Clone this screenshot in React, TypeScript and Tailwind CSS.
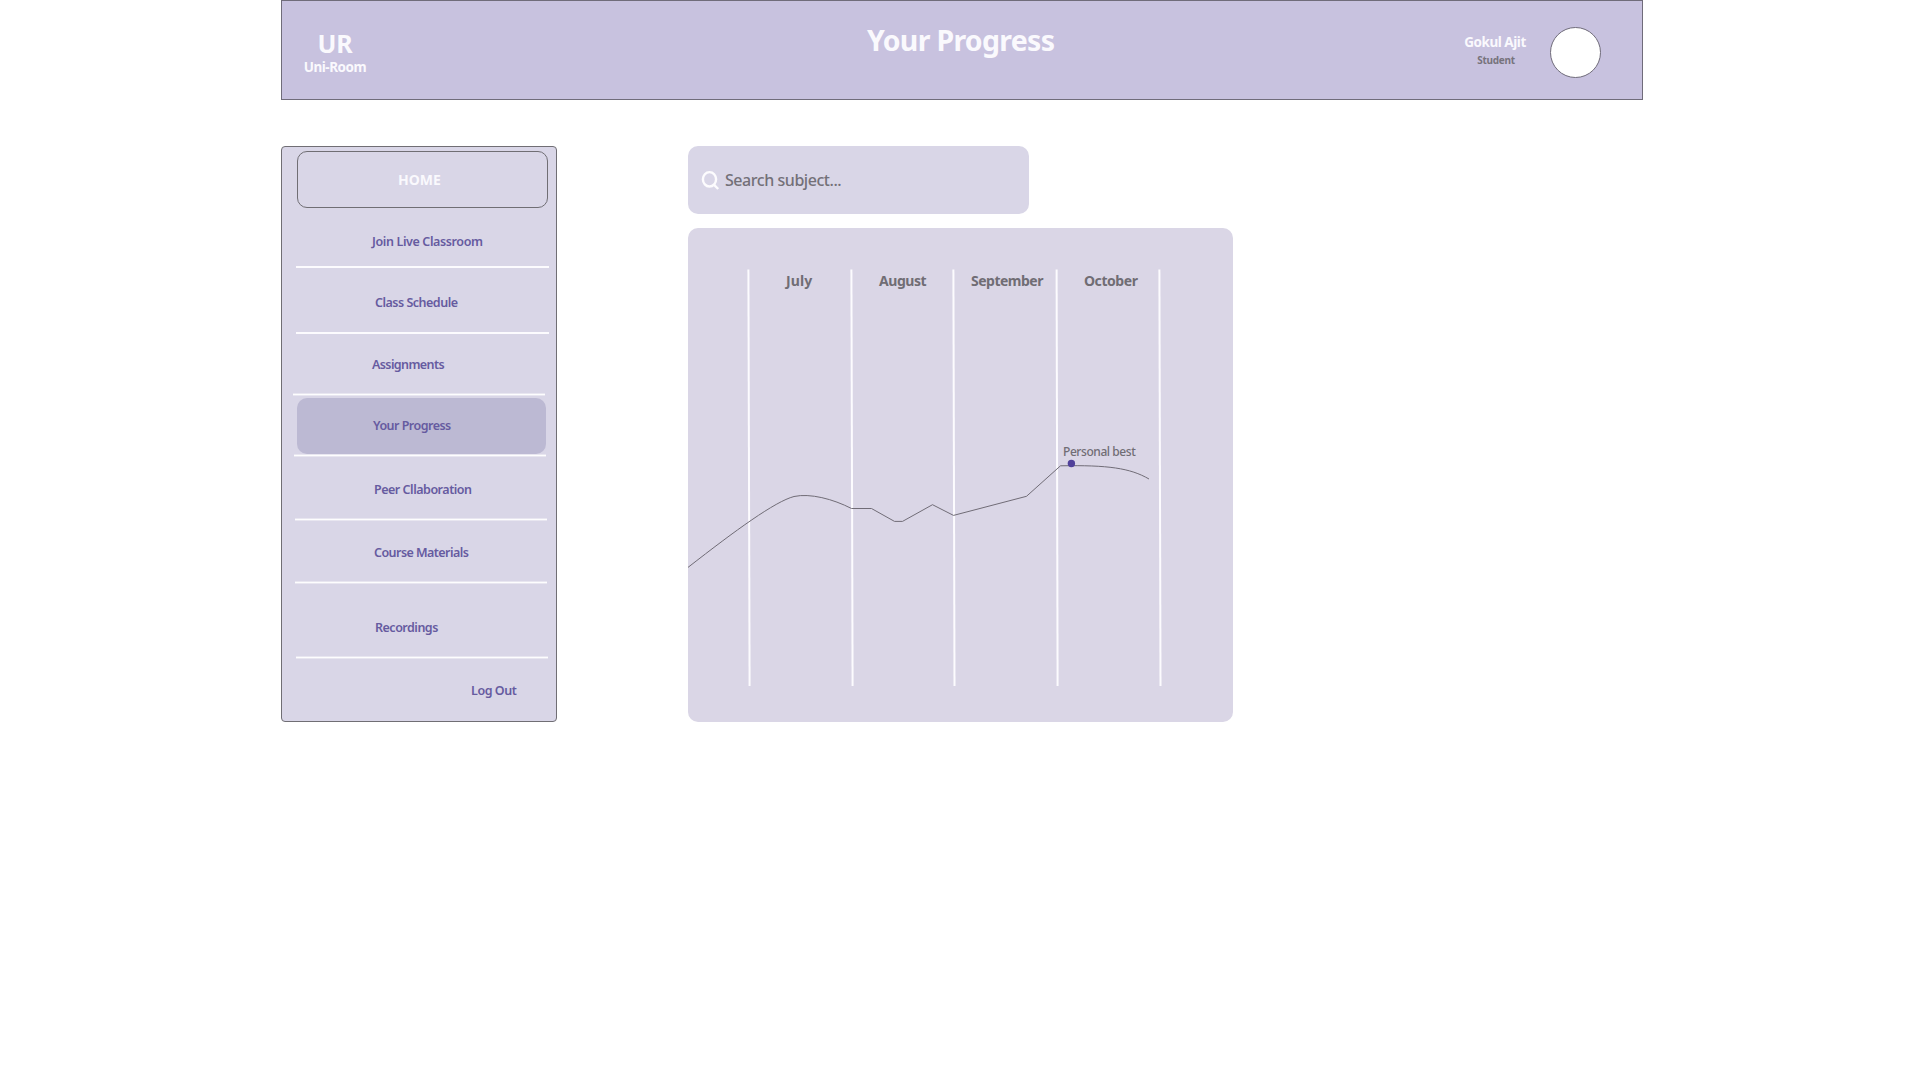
type NavItem = {
  label: string;
  row: string;
  text: string;
  divider: string;
};

const thin = 'h-0.5 bg-[#fcfbfe]';
const soft = 'h-[3px] border-y border-white/40 bg-white/95 bg-clip-padding';

const navTop: NavItem[] = [
  { label: 'Join Live Classroom', row: 'h-15 pt-6', text: 'ml-[90px] tracking-[-0.38px]', divider: `ml-3.5 w-[253px] ${thin}` },
  { label: 'Class Schedule', row: 'h-[66px] pt-[25px]', text: 'ml-[93px] tracking-[-0.5px]', divider: `ml-3.5 w-[253px] ${thin}` },
  { label: 'Assignments', row: 'h-[62px] pt-[21px]', text: 'ml-[90px] tracking-[-0.6px]', divider: `ml-[11px] w-[252px] ${soft}` },
];

const navBottom: NavItem[] = [
  { label: 'Peer Cllaboration', row: 'h-16 pt-[23px]', text: 'ml-[92px] tracking-[-0.48px]', divider: `ml-[13px] w-[252px] ${soft}` },
  { label: 'Course Materials', row: 'h-[63px] pt-[22px]', text: 'ml-[92px] tracking-[-0.55px]', divider: `ml-[13px] w-[252px] ${soft}` },
  { label: 'Recordings', row: 'h-[75px] pt-[34px]', text: 'ml-[93px] tracking-[-0.5px]', divider: `ml-3.5 w-[252px] ${soft}` },
];

function NavRow({ item }: { item: NavItem }) {
  return (
    <li className={`flex flex-col justify-between ${item.row}`}>
      <a className={`leading-5 ${item.text}`}>{item.label}</a>
      <div className={item.divider} />
    </li>
  );
}

function Header() {
  return (
    <header className="flex h-[100px] items-start border border-[#706c7a] bg-[#c8c2df] text-[#faf9fd]">
      <div className="ml-[21px] mt-[27px] flex w-16 flex-col items-center font-bold">
        <span className="text-[25px] leading-[30px] tracking-[-0.2px]">UR</span>
        <span className="-mt-px text-[13.5px] leading-5 tracking-[-0.45px] whitespace-nowrap">Uni-Room</span>
      </div>
      <h1 className="ml-[500px] mt-[19px] w-[190px] text-[28.5px] leading-10 font-bold tracking-[-0.7px] whitespace-nowrap">
        Your Progress
      </h1>
      <div className="ml-[406px] mt-[31px] flex w-[64px] flex-col items-center font-bold">
        <span className="text-[13.5px] leading-5 tracking-[-0.45px] whitespace-nowrap">Gokul Ajit</span>
        <span className="ml-0.5 text-[10px] leading-4 tracking-[-0.3px] text-[#77737c]">Student</span>
      </div>
      <div className="ml-[23px] mt-[26px] size-[51px] rounded-full border border-[#706c7a] bg-white" />
    </header>
  );
}

function Sidebar() {
  return (
    <nav className="h-[576px] w-[276px] rounded border border-[#706e74] bg-[#d9d6e7] text-[12.5px] font-semibold text-[#665ba0]">
      <a className="mt-1 ml-[15px] flex h-[57px] w-[251px] items-center justify-center rounded-[10px] border border-[#706e74] pr-1.5 text-sm leading-5 font-bold text-[#faf9fd]">
        HOME
      </a>
      <ul>
        {navTop.map((item) => (
          <NavRow key={item.label} item={item} />
        ))}
        <li className="flex h-[61px] flex-col justify-between pt-0.5">
          <a className="ml-[15px] h-14 w-[249px] rounded-[10px] bg-[#bcb9d3] pt-[18px] pl-[76px] leading-5 tracking-[-0.52px]">
            Your Progress
          </a>
          <div className={`ml-3 w-[252px] ${soft}`} />
        </li>
        {navBottom.map((item) => (
          <NavRow key={item.label} item={item} />
        ))}
        <li className="flex pt-[22px]">
          <a className="ml-[189px] leading-5 tracking-[-0.45px]">Log Out</a>
        </li>
      </ul>
    </nav>
  );
}

function SearchBox() {
  return (
    <div className="flex h-17 w-[341px] items-center rounded-[10px] bg-[#d9d6e7] pl-3">
      <svg className="size-[22px]" viewBox="0 0 22 22" fill="none" stroke="#fdfcfe" strokeWidth="2.4">
        <ellipse cx="9.5" cy="10.3" rx="6.6" ry="7.2" />
        <path d="M13.6 15.3 18.2 20" />
      </svg>
      <span className="ml-[3px] text-base leading-6 font-medium tracking-[-0.45px] text-[#737078]">Search subject...</span>
    </div>
  );
}

const gridLines = [
  [60.4, 61.6],
  [163.4, 164.6],
  [265.4, 266.5],
  [368.6, 369.6],
  [471.4, 472.5],
];

function ProgressChart() {
  return (
    <section className="relative mt-3.5 h-[494px] w-[545px] rounded-[10px] bg-[#dad6e6] text-[#706d74]">
      <svg className="block size-full" viewBox="0 0 545 494" fill="none">
        {gridLines.map(([top, bottom]) => (
          <line key={top} x1={top} y1="41.5" x2={bottom} y2="458" stroke="#fcfbfe" strokeWidth="2" />
        ))}
        <path
          d="M0 339.4C48 302 87 273.5 106 268.5C122 265 145 271 163.5 280.5H183.5L206.5 293.4H214.5L244.5 276.7L265.5 287.4L338.5 268.3L372.5 237.8C420 237 442 240 461 251"
          stroke="#706c76"
        />
        <circle cx="383.4" cy="235.5" r="3.7" fill="#50419a" />
      </svg>
      <div className="absolute top-[43px] left-[61px] flex text-sm leading-5 font-bold">
        <span className="w-[102px] pl-[37px] tracking-[0.1px]">July</span>
        <span className="w-[102px] pl-7 tracking-[-0.45px]">August</span>
        <span className="w-[103px] pl-[18px] tracking-[-0.5px]">September</span>
        <span className="w-[103px] pl-7 tracking-[-0.45px]">October</span>
      </div>
      <span className="absolute top-[214px] left-[375px] text-xs leading-5 font-medium tracking-[-0.43px] whitespace-nowrap">
        Personal best
      </span>
    </section>
  );
}

export default function App() {
  return (
    <div className="min-h-screen bg-white font-['Noto_Sans','Open_Sans',sans-serif]">
      <div className="ml-[281px] w-[1362px]">
        <Header />
        <div className="mt-[46px] flex gap-[131px]">
          <Sidebar />
          <main>
            <SearchBox />
            <ProgressChart />
          </main>
        </div>
      </div>
    </div>
  );
}
